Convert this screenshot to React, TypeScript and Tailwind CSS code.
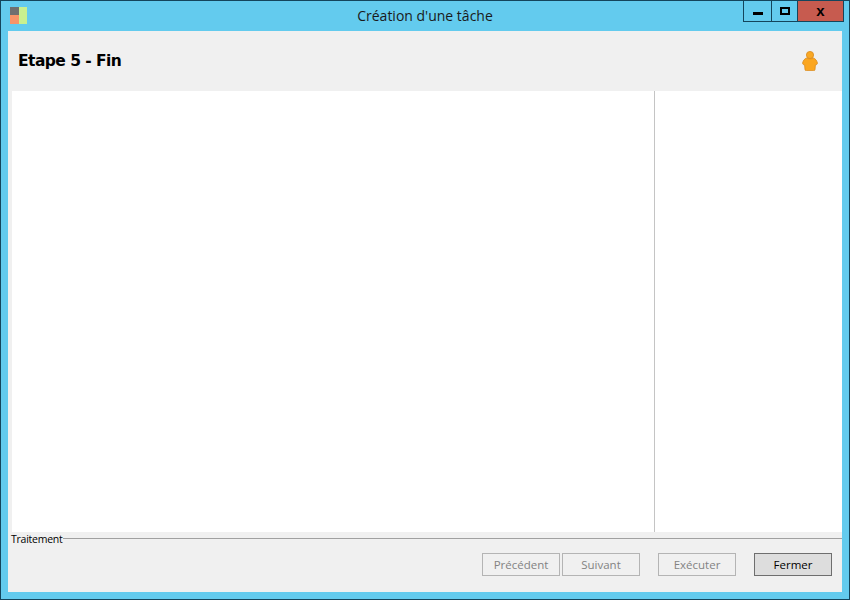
import React from "react";

function AppIcon() {
  return (
    <svg width="17" height="17" viewBox="0 0 17 17" className="shrink-0">
      <rect x="0" y="0" width="9" height="8" fill="#6f6f6f" />
      <rect x="0" y="8" width="9" height="9" fill="#f79468" />
      <rect x="9" y="0" width="8" height="17" fill="#c9f08f" />
    </svg>
  );
}

function PersonIcon() {
  return (
    <svg width="16" height="20" viewBox="0 0 16 20" className="-mt-[2px]">
      <circle cx="8" cy="4" r="3.6" fill="#f9a825" stroke="#d98a1c" strokeWidth="0.8" />
      <path
        d="M4.5 7 C2.5 7.8 1.2 9.5 0.6 12 C0.5 13.2 1.3 13.8 2.6 13.8 L3 18.5 C3 19.3 3.5 19.6 4.3 19.6 L11.7 19.6 C12.5 19.6 13 19.3 13 18.5 L13.4 13.8 C14.7 13.8 15.5 13.2 15.4 12 C14.8 9.5 13.5 7.8 11.5 7 C10 8 6 8 4.5 7 Z"
        fill="#fba61f"
        stroke="#d98a1c"
        strokeWidth="0.8"
      />
    </svg>
  );
}

function WizardButton({ label, active }: { label: string; active?: boolean }) {
  return (
    <button
      className={
        active
          ? "w-[78px] h-[23px] border border-[#6e6e6e] bg-[#dddddd] text-[11.5px] text-black"
          : "w-[78px] h-[23px] border border-[#b4b4b4] bg-[#f0f0f0] text-[11.5px] text-[#838383]"
      }
    >
      {label}
    </button>
  );
}

export default function App() {
  return (
    <div className="w-[850px] h-[600px] flex flex-col border border-[#14455c] bg-[#63cbee] font-['Open_Sans','Noto_Sans',sans-serif] overflow-hidden">
      {/* Barre de titre */}
      <div className="relative h-[30px] shrink-0 flex items-center justify-center">
        <div className="absolute left-[9px] top-[6px]">
          <AppIcon />
        </div>
        <span className="text-[14px] text-[#1a1a1a] pb-[1px]">Création d'une tâche</span>
        <div className="absolute right-[5px] top-0 flex h-[21px] border border-t-0 border-[#14455c]">
          <div className="w-[28px] flex items-end justify-center pb-[6px] border-r border-[#14455c]">
            <div className="w-[10px] h-[3px] bg-black" />
          </div>
          <div className="w-[26px] flex items-center justify-center border-r border-[#14455c]">
            <div className="w-[10px] h-[8px] border-2 border-black" />
          </div>
          <div className="w-[45px] flex items-center justify-center bg-[#c75b4f]">
            <span className="font-['Liberation_Sans',sans-serif] text-[15px] font-bold text-black leading-none pb-[2px]">x</span>
          </div>
        </div>
      </div>

      {/* Contenu */}
      <div className="flex-1 mx-[7px] flex flex-col bg-[#f0f0f0] min-h-0">
        <div className="h-[60px] shrink-0 flex items-center justify-between pl-[10px] pr-[24px] pt-[1px]">
          <h1 className="font-['DejaVu_Sans',sans-serif] text-[15.5px] tracking-[-0.55px] font-bold text-black pt-[1px]">Etape 5 - Fin</h1>
          <PersonIcon />
        </div>
        <div className="h-[441px] shrink-0 flex pl-[4px]">
          <div className="w-[643px] bg-white border-r border-[#c4c4c4]" />
          <div className="flex-1 bg-white" />
        </div>
        <div className="flex-1 flex flex-col pl-[4px]">
          <div className="flex items-center h-[13px]">
            <span className="text-[10.5px] tracking-[-0.25px] leading-none text-black -ml-[1px] pt-[2px]">Traitement</span>
            <div className="flex-1 h-px bg-[#a0a0a0]" />
          </div>
          <div className="flex justify-end pr-[10px] mt-[8px]">
            <div className="flex gap-[2px]">
              <WizardButton label="Précédent" />
              <WizardButton label="Suivant" />
            </div>
            <div className="flex gap-[18px] ml-[18px]">
              <WizardButton label="Exécuter" />
              <WizardButton label="Fermer" active />
            </div>
          </div>
        </div>
      </div>
      <div className="h-[7px] shrink-0" />
    </div>
  );
}
